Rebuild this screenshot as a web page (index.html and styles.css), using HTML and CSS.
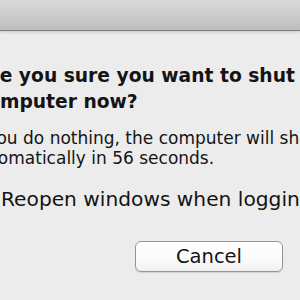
FILE: index.html
```html
<!DOCTYPE html>
<html>
<head>
<meta charset="utf-8">
<link rel="stylesheet" href="styles.css">
</head>
<body>
<div class="toolbar"></div>
<div class="sheet">
  <div class="content">
    <p class="title">Are you sure you want to shut down your<br>computer now?</p>
    <p class="info">If you do nothing, the computer will shut down<br>automatically in 56 seconds.</p>
    <label class="check">
      <span class="box"></span>
      <span class="label">Reopen windows when logging back in</span>
    </label>
    <div class="buttons">
      <button class="btn">Cancel</button>
      <button class="btn default">Shut Down</button>
    </div>
  </div>
</div>
</body>
</html>
```
FILE: styles.css
```css
html, body {
  margin: 0;
  padding: 0;
  width: 300px;
  height: 300px;
  overflow: hidden;
  background: #ececec;
}
body {
  font-family: "DejaVu Sans", "Liberation Sans", sans-serif;
  color: #141414;
}
.toolbar {
  height: 30px;
  background: linear-gradient(#dadada, #bdbdbd);
  border-bottom: 1px solid #7d7d7d;
  box-shadow: 0 1px 3px rgba(0, 0, 0, 0.18);
  position: relative;
}
.sheet {
  width: 600px;
  padding-top: 32px;
}
.content {
  margin-left: -24px;
}
.title {
  margin: 0;
  font-size: 18.7px;
  font-weight: bold;
  line-height: 26px;
  white-space: nowrap;
}
.info {
  margin: 13px 0 0 -6px;
  font-size: 17px;
  line-height: 20px;
  white-space: nowrap;
}
.check {
  display: flex;
  align-items: center;
  gap: 5px;
  margin: 19px 0 0 -1px;
  font-size: 20.2px;
  line-height: 24px;
  white-space: nowrap;
}
.box {
  width: 19px;
  height: 19px;
  border-radius: 3px;
  border: 1px solid #b4c6dc;
  background: linear-gradient(#e6eef8, #c4d8ee);
  flex: none;
}
.buttons {
  display: flex;
  gap: 22px;
  margin-top: 30px;
  padding-left: 159px;
}
.btn {
  flex: none;
  width: 148px;
  height: 31px;
  border: 1px solid #959595;
  border-radius: 6px;
  background: linear-gradient(#ffffff, #fbfbfb 55%, #f0f0f0);
  box-shadow: 0 1px 1px rgba(0, 0, 0, 0.12);
  font-family: "DejaVu Sans", "Liberation Sans", sans-serif;
  font-size: 19.5px;
  color: #141414;
  padding: 0;
  display: flex;
  align-items: center;
  justify-content: center;
}
.btn.default {
  background: linear-gradient(#c7def6, #8ab8ea);
  border-color: #5d7fad;
}
```
